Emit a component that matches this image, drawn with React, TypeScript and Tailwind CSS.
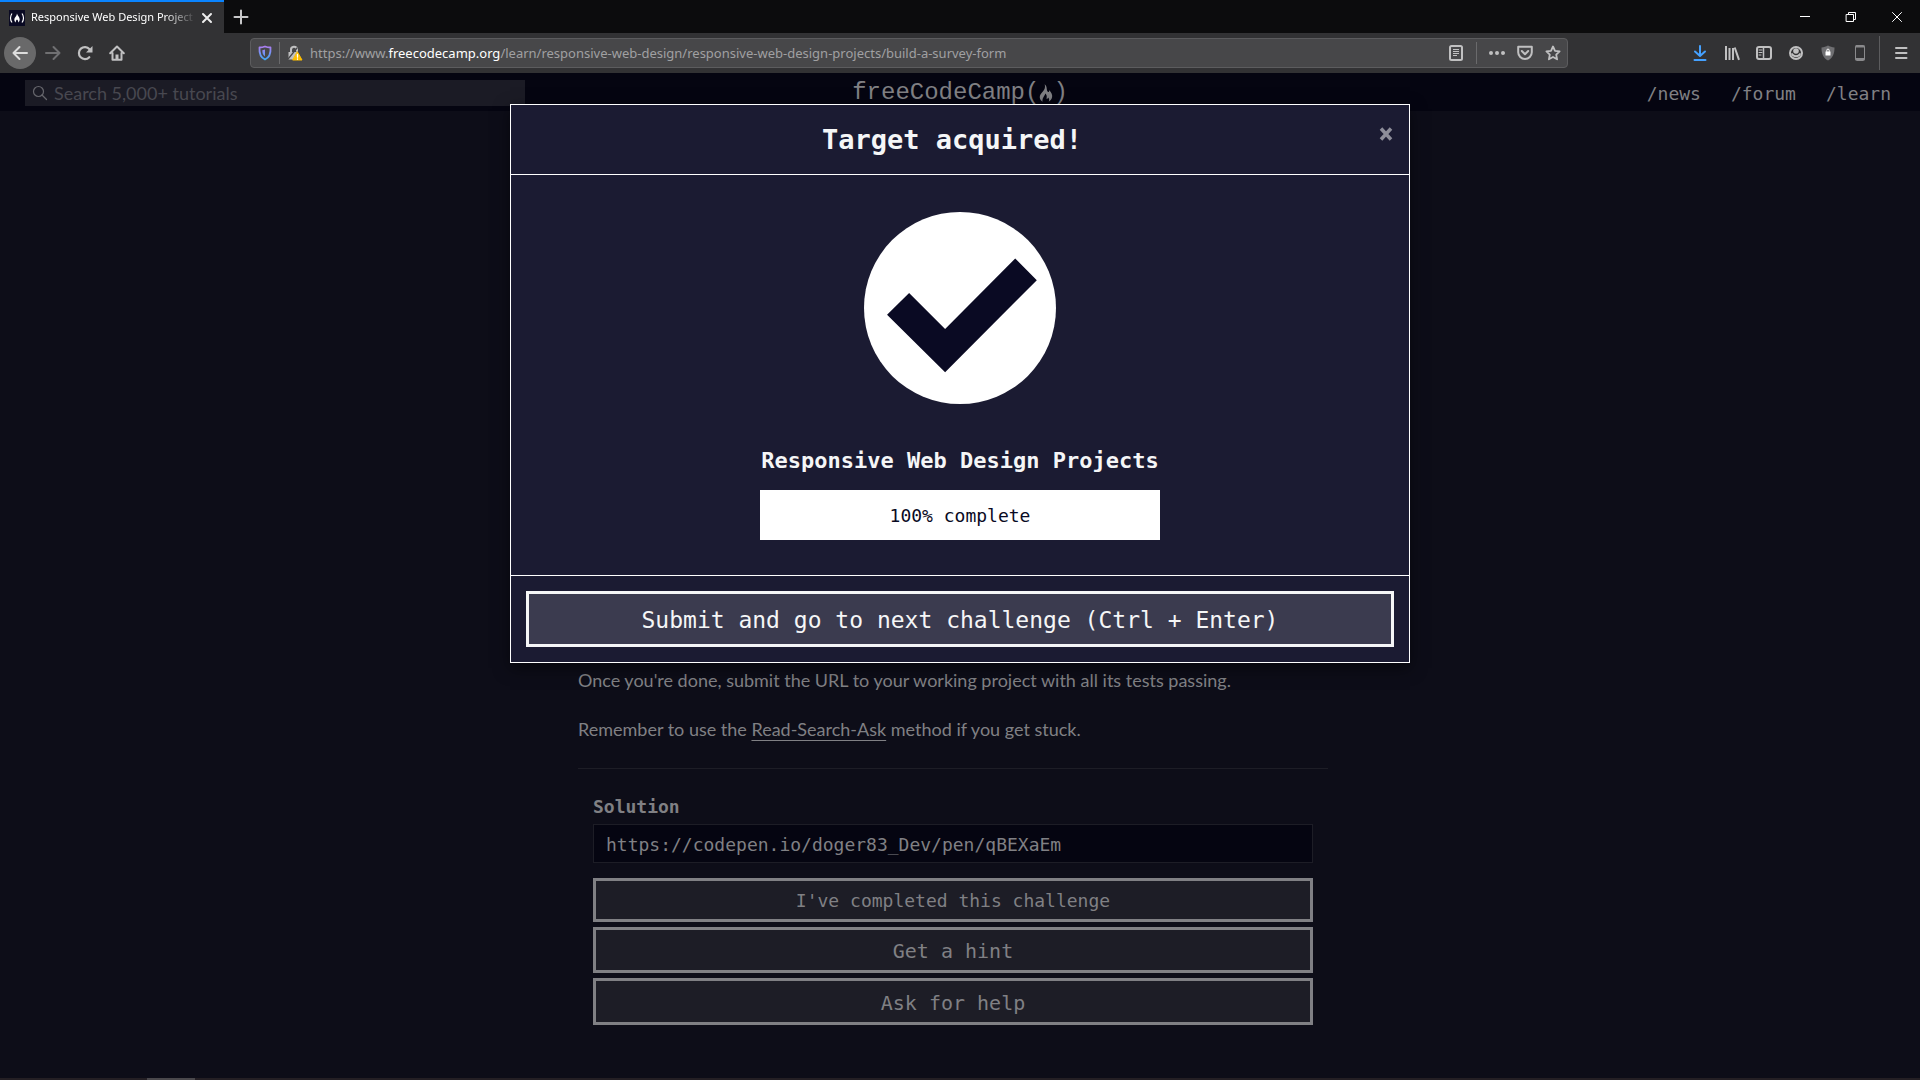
import React from "react";

const mono = "font-['DejaVu_Sans_Mono',monospace]";

function Ico({ className = "", children }: { className?: string; children: React.ReactNode }) {
  return (
    <svg viewBox="0 0 16 16" className={`block size-4 shrink-0 ${className}`} fill="none" stroke="currentColor" strokeWidth="2" strokeLinecap="round" strokeLinejoin="round" aria-hidden="true">
      {children}
    </svg>
  );
}

function ToolButton({ label, children, className = "" }: { label: string; children: React.ReactNode; className?: string }) {
  return (
    <button type="button" aria-label={label} className={`flex h-8 w-8 shrink-0 items-center justify-center ${className}`}>
      {children}
    </button>
  );
}

function TitleBar() {
  return (
    <div className="flex h-[33px] items-stretch bg-[#0c0c0d] text-white">
      <div className="flex w-56 items-center border-t-2 border-[#0a84ff] bg-[#323234] pl-[9px] pr-[7px]">
        <svg viewBox="0 0 16 16" className="mr-1.5 size-4 shrink-0 bg-[#0a0a23]" fill="none" stroke="#fff" strokeWidth="1.2" aria-hidden="true">
          <path d="M3 3.500C1 6 1 10 3 12.500M13 3.500c2 2.500 2 6.500 0 9" />
          <path d="M8 3.500c.3 2 2.700 3.500 2.700 6 0 1.500-.9 2.500-1.700 3 .5-1.500-.2-2.500-1-3-.8.5-1.500 1.500-1 3-.8-.5-1.700-1.500-1.700-3C5.300 7.500 8 6 8 3.500z" fill="#fff" stroke="none" />
        </svg>
        <span className="min-w-0 flex-1 whitespace-nowrap font-['Noto_Sans',sans-serif] text-[11px] [mask-image:linear-gradient(to_right,#000_80%,transparent)]">
          Responsive Web Design Project
        </span>
        <button type="button" aria-label="Close tab" className="flex size-5 items-center justify-center">
          <Ico className="text-[#eeeeee]"><path d="M4 4l8 8M12 4l-8 8" /></Ico>
        </button>
      </div>
      <button type="button" aria-label="New tab" className="flex w-[34px] items-center justify-center text-[#c8c8c9]">
        <Ico><path d="M8 1.500v13M1.500 8h13" /></Ico>
      </button>
      <div className="ml-auto flex">
        <button type="button" aria-label="Minimize" className="flex w-[46px] items-center justify-center">
          <Ico><path d="M3 7.500h10" strokeWidth="1" strokeLinecap="butt" /></Ico>
        </button>
        <button type="button" aria-label="Restore" className="flex w-[46px] items-center justify-center">
          <Ico><path d="M3.500 5.500h7v7h-7zM5.500 5.500v-2h7v7h-2" strokeWidth="1" strokeLinejoin="miter" /></Ico>
        </button>
        <button type="button" aria-label="Close" className="flex w-[46px] items-center justify-center">
          <Ico><path d="M3.500 3.500l9 9M12.500 3.500l-9 9" strokeWidth="1" /></Ico>
        </button>
      </div>
    </div>
  );
}

function ToolBar() {
  return (
    <div className="flex h-10 items-center bg-[#323234] pl-1 pr-[3px] text-[#c0c0c1]">
      <ToolButton label="Back" className="rounded-full bg-[#69696a] text-[#dddddd]">
        <Ico><path d="M15 8H1.500M7.500 2L1.500 8l6 6" /></Ico>
      </ToolButton>
      <ToolButton label="Forward" className="ml-px text-[#707072]">
        <Ico><path d="M1 8h13.500M8.500 2l6 6-6 6" /></Ico>
      </ToolButton>
      <ToolButton label="Reload">
        <Ico><path d="M12.300 12.200A6 6 0 1 1 12.500 4.200" strokeWidth="2.200" /><path d="M15.500 1v6.500H9z" fill="currentColor" stroke="none" /></Ico>
      </ToolButton>
      <ToolButton label="Home">
        <Ico><path d="M1.200 8.200L8 1.500l6.800 6.700M3.500 8v6.800h9V8" /><path d="M8 14v-4.500" strokeWidth="3" strokeLinecap="butt" /></Ico>
      </ToolButton>
      <div className="ml-[117px] mr-[116px] flex h-[30px] min-w-0 flex-1 items-center rounded-sm border border-[#5c5c5e] bg-[#474749]">
        <Ico className="ml-1.5">
          <defs>
            <linearGradient id="shield" gradientUnits="userSpaceOnUse" x1="0" y1="1" x2="0" y2="15">
              <stop offset="0" stopColor="#b07cf0" />
              <stop offset="1" stopColor="#3fa8f5" />
            </linearGradient>
          </defs>
          <path d="M8 1.500c2 .8 3.800 1 5.500 1 .4 5.500-1 10-5.500 12C3.500 12.500 2.100 8 2.500 2.500c1.700 0 3.500-.2 5.500-1z" stroke="url(#shield)" strokeWidth="1.800" />
          <path d="M8 4.500v7C6 10 5.300 8 5.300 5.200z" fill="url(#shield)" stroke="none" />
        </Ico>
        <span className="ml-1.5 h-[22px] w-px bg-[#6a6a6c]" />
        <Ico className="ml-[7px]">
          <path d="M4 7V5a3 3 0 0 1 6-.5V6" />
          <path d="M1.500 7h9v7.500h-9z" fill="currentColor" stroke="none" />
          <path d="M1.500 13.500L10 3" stroke="#474749" strokeWidth="1.200" />
          <path d="M10.500 7L15 15H6z" fill="#ffbf00" stroke="#ffbf00" strokeWidth="1" />
          <path d="M10.500 9.500v2.700M10.500 14v.3" stroke="#fff" strokeWidth="1.300" />
        </Ico>
        <div role="textbox" aria-label="Address" className="ml-[7px] min-w-0 flex-1 whitespace-nowrap pt-0.5 font-['Noto_Sans',sans-serif] text-[13px] text-[#a0a0a2]">
          https://www.<span className="text-white">freecodecamp.org</span>/learn/responsive-web-design/responsive-web-design-projects/build-a-survey-form
        </div>
        <button type="button" aria-label="Reader view" className="flex w-8 justify-center">
          <Ico><rect x="2" y="1" width="12" height="14" rx="1.500" /><path d="M5 4.500h6M5 6.500h6M5 8.500h6M5 10.500h4" strokeWidth="1" strokeLinecap="butt" /></Ico>
        </button>
        <span className="ml-1 mr-1.5 h-[22px] w-px bg-[#6a6a6c]" />
        <button type="button" aria-label="Page actions" className="flex w-7 justify-center">
          <Ico><path d="M2 8h.01M8 8h.01M14 8h.01" strokeWidth="4" /></Ico>
        </button>
        <button type="button" aria-label="Save to Pocket" className="flex w-7 justify-center">
          <Ico><path d="M1.200 1.800h13.600v5.400a6.800 6.800 0 0 1-13.600 0z" /><path d="M4.800 6l3.200 3.200L11.200 6" /></Ico>
        </button>
        <button type="button" aria-label="Bookmark" className="flex w-7 justify-center">
          <Ico><path d="M8 1.500l2 4.300 4.600.6-3.400 3.200.9 4.700L8 12l-4.100 2.300.9-4.700L1.400 6.400 6 5.800z" strokeWidth="1.800" /></Ico>
        </button>
      </div>
      <ToolButton label="Downloads" className="text-[#45a1ff]"><Ico><path d="M8 1v9.500M3 6.500L8 11l5-4.500M2.500 15h11" /></Ico></ToolButton>
      <ToolButton label="Library"><Ico><path d="M2 1v14M5.500 3v12M9 3v12M10.700 2.500l4.300 12.300" strokeLinecap="butt" /></Ico></ToolButton>
      <ToolButton label="Sidebars"><Ico><rect x="1" y="2" width="14" height="12" rx="2" /><path d="M7.500 2v12" strokeWidth="1.500" /><path d="M3 5h3M3 7.500h3M3 10h2" strokeWidth="1" /></Ico></ToolButton>
      <ToolButton label="Account"><Ico><circle cx="8" cy="8" r="6" /><circle cx="8" cy="6" r="2.800" fill="currentColor" stroke="none" /><path d="M4 9c1.500 3 6.500 3 8 0" strokeWidth="1.800" /></Ico></ToolButton>
      <ToolButton label="Extension"><Ico><path d="M8 .5c2 1.200 4 1.800 6.500 2C14.500 8.500 13 13 8 15.500 3 13 1.500 8.500 1.500 2.500 4 2.300 6 1.700 8 .5z" fill="#6f6f72" stroke="none" /><path d="M5.500 6.500h5v4h-5z" fill="#fff" stroke="none" /><path d="M6.800 6.500V5.300a1.200 1.200 0 0 1 2.400 0v1.200" stroke="#fff" strokeWidth="1" /></Ico></ToolButton>
      <ToolButton label="Device view"><Ico className="text-[#8a8a8c]"><rect x="3.500" y=".5" width="9" height="15" rx="1" strokeWidth="1" /><path d="M3.500 1.500h9M3.500 14h9" strokeWidth="2" strokeLinecap="butt" /></Ico></ToolButton>
      <span className="ml-[3px] h-[34px] w-px bg-[#5c5c5e]" />
      <ToolButton label="Menu" className="ml-[5px]"><Ico><path d="M3 3h10.500M3 8h10.500M3 13h10.500" /></Ico></ToolButton>
    </div>
  );
}

function SiteHeader() {
  return (
    <header className="grid h-[38px] grid-cols-3 items-start bg-[#050511] pt-[7px] text-[#808084]">
      <div className="ml-[25px] flex h-[26px] w-[500px] items-center bg-[#1b1b25]">
        <Ico className="ml-[7px] text-[#66666c]"><circle cx="6.500" cy="6.500" r="5" strokeWidth="1.200" /><path d="M10 10l4.500 4.500" strokeWidth="1.200" /></Ico>
        <input aria-label="Search tutorials" placeholder="Search 5,000+ tutorials" className="ml-1.5 min-w-0 flex-1 bg-transparent font-['Lato',sans-serif] text-lg leading-6 placeholder:text-[#484850]" />
      </div>
      <a href="#home" className="flex h-[26px] items-center justify-self-center font-['Liberation_Mono',monospace] text-2xl leading-[26px]">
        freeCodeCamp(
        <svg viewBox="0 0 16 20" className="h-5 w-3.5" fill="currentColor" aria-hidden="true">
          <path d="M6.500 0c3.500 3 1.500 6 3.500 8.500 1 1 2-.2 1.500-2C14 9 15.500 12 15 14.500c-.4 2.300-1.800 4-4 5.500 1-2 .8-3.500-.5-5-.3 1.200-1 1.800-2 1.500C9.500 13.500 8.500 11.500 7 10.500c.3 2.500-3.500 4-3 9.500C1.500 18.500.5 16 1 13.500 2 9 8.500 7 6.500 0z" />
        </svg>
        )
      </a>
      <nav className={`mr-[29px] flex h-[26px] items-center gap-[30px] justify-self-end pt-0.5 text-lg ${mono}`}>
        <a href="#news">/news</a>
        <a href="#forum">/forum</a>
        <a href="#learn">/learn</a>
      </nav>
    </header>
  );
}

function Challenge() {
  const btn = "border-[3px] border-[#808084] bg-[#1d1d26] pt-0.5 text-center";
  return (
    <main className="mx-auto w-[750px] max-w-full -translate-x-[7px] pt-[557px] font-['Lato',sans-serif] text-lg text-[#808084]">
      <p className="leading-[25px]">Once you're done, submit the URL to your working project with all its tests passing.</p>
      <p className="mt-6 leading-[25px]">
        Remember to use the <a href="#rsa" className="underline underline-offset-4">Read-Search-Ask</a> method if you get stuck.
      </p>
      <hr className="mt-[26px] border-[#1d1d26]" />
      <form className={`mx-[15px] mt-[25px] flex flex-col ${mono}`}>
        <label htmlFor="solution" className="leading-[25px] font-bold">Solution</label>
        <input id="solution" defaultValue="https://codepen.io/doger83_Dev/pen/qBEXaEm" className="mt-[5px] h-[39px] border border-[#1d1d26] bg-[#050511] px-3 pt-0.5" />
        <button type="button" className={`mt-[15px] h-11 ${btn}`}>I've completed this challenge</button>
        <button type="button" className={`mt-[5px] h-[46px] text-xl ${btn}`}>Get a hint</button>
        <button type="button" className={`mt-[5px] h-[47px] text-xl ${btn}`}>Ask for help</button>
      </form>
    </main>
  );
}

function CompletionModal() {
  return (
    <section role="dialog" aria-labelledby="modal-title" className={`absolute left-1/2 top-[31px] w-[900px] -translate-x-1/2 border border-white bg-[#1b1b32] text-[#f5f6f7] shadow-[0_5px_15px_rgba(0,0,0,0.5)] ${mono}`}>
      <div className="flex h-[70px] items-center border-b border-white px-[15px]">
        <h2 id="modal-title" className="flex-1 pt-0.5 text-center text-[27px] font-bold">Target acquired!</h2>
        <button type="button" aria-label="Close dialog" className="mb-3 flex size-4 items-center justify-center text-[#8d8d99]">
          <Ico><path d="M3 2.500l10 11M13 2.500L3 13.500" strokeWidth="3.500" strokeLinecap="butt" /></Ico>
        </button>
      </div>
      <div className="flex h-[401px] flex-col items-center border-b border-white pt-[37px]">
        <svg viewBox="0 0 200 200" className="size-48" aria-hidden="true">
          <circle cx="100" cy="100" r="100" fill="#fff" />
          <path d="M24 107L47 84.500 84.500 122 157.500 48.500 180 71 84.500 167z" fill="#0a0a23" />
        </svg>
        <h3 className="mt-[42px] text-[22px] leading-[30px] font-bold">Responsive Web Design Projects</h3>
        <div className="mt-3.5 flex h-[50px] w-[400px] items-center justify-center bg-white pt-0.5 text-lg text-[#0a0a23]">100% complete</div>
      </div>
      <div className="p-[15px]">
        <button type="button" className="h-14 w-full border-[3px] border-[#f5f6f7] bg-[#3b3b4f] pt-0.5 text-[23px]">Submit and go to next challenge (Ctrl + Enter)</button>
      </div>
    </section>
  );
}

export default function App() {
  return (
    <div className="flex h-screen flex-col overflow-hidden bg-[#0d0d18]">
      <TitleBar />
      <ToolBar />
      <div className="relative min-h-0 flex-1">
        <SiteHeader />
        <Challenge />
        <CompletionModal />
      </div>
      <div className="h-0.5 bg-[#241f24]">
        <div className="ml-[147px] h-full w-12 bg-[#4a484c]" />
      </div>
    </div>
  );
}
